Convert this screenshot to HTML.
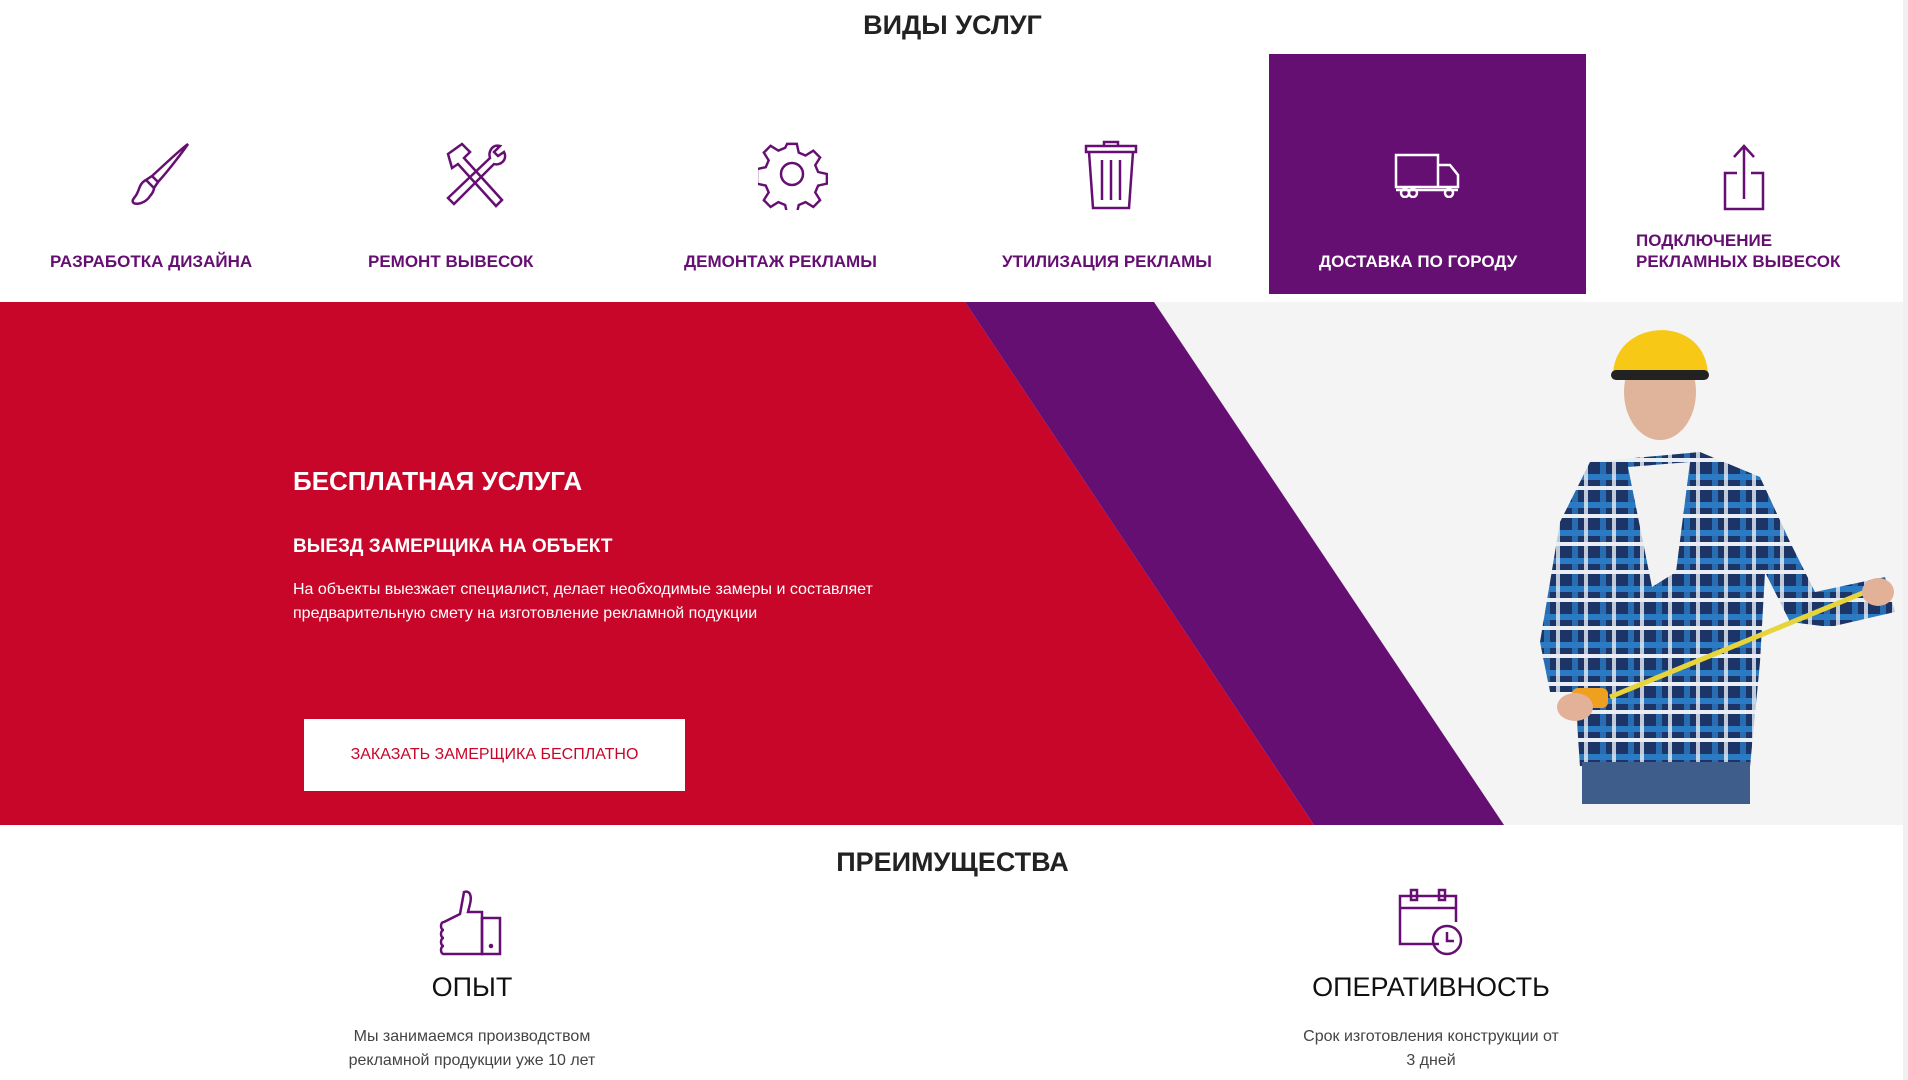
<!DOCTYPE html>
<html><head><meta charset="utf-8"><style>
*{margin:0;padding:0;box-sizing:border-box}
html,body{width:1908px;height:1080px;overflow:hidden}
body{background:#fff;font-family:"Liberation Sans",sans-serif;position:relative}
.abs{position:absolute}
.h{font-weight:bold;color:#222;text-align:center}
.lab{position:absolute;font-size:17px;color:#660f72;font-weight:bold;line-height:21px}
svg.ic{position:absolute}
</style></head><body>
<div class="abs h" style="left:0;width:1905px;top:10px;font-size:27px;">ВИДЫ УСЛУГ</div>
<div class="abs" style="left:1269px;top:54px;width:317px;height:240px;background:#660f72"></div>

<svg class="ic" style="left:124px;top:140px" width="70" height="70" viewBox="0 0 70 70" fill="none" stroke="#660f72" stroke-width="2.5"><path d="M64 4 C60 10 45 30 34 42 L28 36 C40 25 58 8 64 4Z"/><path d="M28 36 L22 40 L30 48 L34 42"/><path d="M22 40 C14 44 16 52 10 58 C4 66 20 66 26 56 C30 52 30 48 30 48"/></svg>
<svg class="ic" style="left:440px;top:140px" width="70" height="70" viewBox="0 0 70 70" fill="none" stroke="#660f72" stroke-width="2.5"><path d="M8 14 L22 4 L30 12 L24 18 L62 60 L56 66 L18 24 L12 28Z"/><path d="M60 6 C52 4 48 12 50 18 L8 58 L14 64 L54 24 C60 26 68 20 64 12 L58 16 L54 12Z"/></svg>
<svg class="ic" style="left:758px;top:140px" width="70" height="70" viewBox="0 0 70 70" fill="none" stroke="#660f72" stroke-width="2.5"><path d="M30 4h10l2 9 7 3 8-5 7 7-5 8 3 7 9 2v10l-9 2-3 7 5 8-7 7-8-5-7 3-2 9H30l-2-9-7-3-8 5-7-7 5-8-3-7-9-2V30l9-2 3-7-5-8 7-7 8 5 7-3z" transform="scale(.97)"/><circle cx="34" cy="34" r="11"/></svg>
<svg class="ic" style="left:1084px;top:140px" width="54" height="70" viewBox="0 0 54 70" fill="none" stroke="#660f72" stroke-width="2.5"><path d="M20 6V2h14v4M2 6h50v6H2zM5 12l4 56h36l4-56"/><path d="M18 20v40M27 20v40M36 20v40"/></svg>
<svg class="ic" style="left:1393px;top:152px" width="70" height="46" viewBox="0 0 70 46" fill="none" stroke="#fff" stroke-width="2.5"><path d="M3 3h42v32H3zM45 13h12l8 10v12H45"/><path d="M3 38h62"/><circle cx="12" cy="41" r="4"/><circle cx="20" cy="41" r="4"/><circle cx="56" cy="41" r="4"/></svg>
<svg class="ic" style="left:1722px;top:143px" width="44" height="70" viewBox="0 0 44 70" fill="none" stroke="#660f72" stroke-width="2.5"><path d="M22 56V3M12 14L22 3 32 14"/><path d="M15 30H3v36h38V30H29"/></svg>

<div class="lab" style="left:50px;top:251px">РАЗРАБОТКА ДИЗАЙНА</div>
<div class="lab" style="left:368px;top:251px">РЕМОНТ ВЫВЕСОК</div>
<div class="lab" style="left:684px;top:251px">ДЕМОНТАЖ РЕКЛАМЫ</div>
<div class="lab" style="left:1002px;top:251px">УТИЛИЗАЦИЯ РЕКЛАМЫ</div>
<div class="lab" style="left:1319px;top:251px;color:#fff">ДОСТАВКА ПО ГОРОДУ</div>
<div class="lab" style="left:1636px;top:230px">ПОДКЛЮЧЕНИЕ<br>РЕКЛАМНЫХ ВЫВЕСОК</div>

<svg class="abs" style="left:0;top:302px" width="1905" height="523">
<defs><pattern id="pl" width="28" height="28" patternUnits="userSpaceOnUse"><rect width="28" height="28" fill="#1d3566"/><rect x="0" y="4" width="28" height="6" fill="#2a7bc4"/><rect x="4" y="0" width="6" height="28" fill="#2a7bc4" opacity=".8"/><rect x="0" y="16" width="28" height="4" fill="#e8eef4"/><rect x="16" y="0" width="4" height="28" fill="#e8eef4" opacity=".8"/></pattern></defs>
<rect width="1905" height="523" fill="#f4f4f4"/>
<polygon points="0,0 965,0 1314,523 0,523" fill="#c8062a"/>
<polygon points="965,0 1154,0 1504,523 1314,523" fill="#660f72"/>
<path d="M1590 160 L1700 150 L1760 175 L1790 240 L1815 290 L1885 275 L1895 310 L1830 325 L1790 320 L1765 270 L1760 360 L1750 465 L1580 465 L1575 390 L1550 390 L1540 340 L1560 220Z" fill="url(#pl)"/>
<path d="M1628 165 L1690 160 L1676 270 L1652 285Z" fill="#f2f2f2"/>
<rect x="1582" y="460" width="168" height="42" fill="#3e5d8a"/>
<ellipse cx="1660" cy="90" rx="36" ry="48" fill="#e0b49a"/>
<path d="M1613 75 C1612 15 1708 10 1708 75 Z" fill="#f7c815"/>
<rect x="1611" y="68" width="98" height="10" rx="5" fill="#222"/>
<line x1="1610" y1="395" x2="1887" y2="281" stroke="#e6d43a" stroke-width="5"/>
<rect x="1572" y="386" width="36" height="20" rx="6" fill="#f0a020"/>
<ellipse cx="1575" cy="405" rx="18" ry="14" fill="#e2b198"/>
<ellipse cx="1878" cy="290" rx="16" ry="14" fill="#e2b198"/>
</svg>

<div class="abs" style="left:293px;top:466px;font-size:26px;font-weight:bold;color:#fff">БЕСПЛАТНАЯ УСЛУГА</div>
<div class="abs" style="left:293px;top:536px;font-size:19px;font-weight:bold;color:#fff">ВЫЕЗД ЗАМЕРЩИКА НА ОБЪЕКТ</div>
<div class="abs" style="left:293px;top:578px;font-size:16px;line-height:24px;color:#fff">На объекты выезжает специалист, делает необходимые замеры и составляет<br>предварительную смету на изготовление рекламной подукции</div>
<div class="abs" style="left:304px;top:719px;width:381px;height:72px;background:#fff;color:#c8062a;font-size:16px;text-align:center;line-height:72px">ЗАКАЗАТЬ ЗАМЕРЩИКА БЕСПЛАТНО</div>

<div class="abs h" style="left:0;width:1905px;top:847px;font-size:27px;">ПРЕИМУЩЕСТВА</div>
<svg class="ic" style="left:438px;top:888px" width="68" height="68" viewBox="0 0 68 68" fill="none" stroke="#660f72" stroke-width="2.5"><path d="M22 26 L26 4 C32 2 34 8 32 16 L30 24 H44 V66 H6 C2 66 2 58 6 58 C2 58 2 50 6 50 C2 50 2 42 6 42 C2 42 2 34 6 34 Z"/><rect x="44" y="30" width="18" height="36"/><circle cx="53" cy="58" r="1" fill="#660f72"/></svg>
<svg class="ic" style="left:1397px;top:888px" width="68" height="68" viewBox="0 0 68 68" fill="none" stroke="#660f72" stroke-width="2.5"><path d="M42 56H3V8h56v26"/><path d="M3 20h56"/><rect x="14" y="2" width="6" height="10"/><rect x="42" y="2" width="6" height="10"/><circle cx="50" cy="52" r="14"/><path d="M50 44v9h7"/></svg>
<div class="abs h" style="left:372px;width:200px;top:972px;font-size:27px;font-weight:normal;color:#111">ОПЫТ</div>
<div class="abs h" style="left:1231px;width:400px;top:972px;font-size:27px;font-weight:normal;color:#111">ОПЕРАТИВНОСТЬ</div>
<div class="abs" style="left:322px;width:300px;top:1025px;font-size:16px;line-height:24px;color:#444;text-align:center">Мы занимаемся производством<br>рекламной продукции уже 10 лет</div>
<div class="abs" style="left:1281px;width:300px;top:1025px;font-size:16px;line-height:24px;color:#444;text-align:center">Срок изготовления конструкции от<br>3 дней</div>
<div class="abs" style="left:1903px;top:0;width:5px;height:1080px;background:#f0f0f0"></div>
</body></html>
